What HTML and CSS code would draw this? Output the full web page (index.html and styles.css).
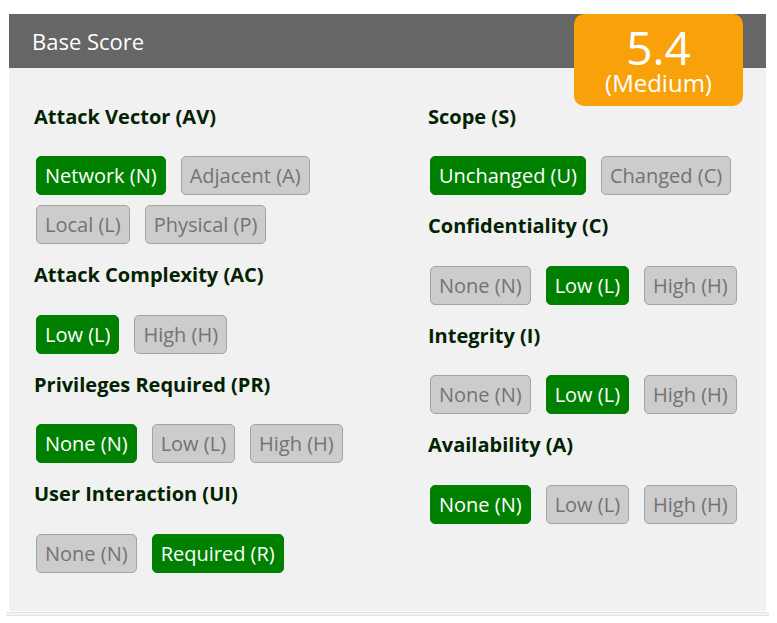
FILE: index.html
```html
<!DOCTYPE html>
<html>
<head>
<meta charset="utf-8">
<link rel="stylesheet" href="styles.css">
</head>
<body>
<div class="panel">
  <div class="panel-head">Base Score</div>
  <div class="score">
    <div class="score-num">5.4</div>
    <div class="score-sev">(Medium)</div>
  </div>
  <div class="panel-body">
    <div class="col">
      <div class="metric">
        <h3>Attack Vector (AV)</h3>
        <div class="opts">
          <span class="btn on">Network (N)</span><span class="btn">Adjacent (A)</span><span class="btn">Local (L)</span><span class="btn">Physical (P)</span>
        </div>
      </div>
      <div class="metric">
        <h3>Attack Complexity (AC)</h3>
        <div class="opts">
          <span class="btn on">Low (L)</span><span class="btn">High (H)</span>
        </div>
      </div>
      <div class="metric">
        <h3>Privileges Required (PR)</h3>
        <div class="opts">
          <span class="btn on">None (N)</span><span class="btn">Low (L)</span><span class="btn">High (H)</span>
        </div>
      </div>
      <div class="metric">
        <h3>User Interaction (UI)</h3>
        <div class="opts">
          <span class="btn">None (N)</span><span class="btn on">Required (R)</span>
        </div>
      </div>
    </div>
    <div class="col">
      <div class="metric">
        <h3>Scope (S)</h3>
        <div class="opts">
          <span class="btn on">Unchanged (U)</span><span class="btn">Changed (C)</span>
        </div>
      </div>
      <div class="metric">
        <h3>Confidentiality (C)</h3>
        <div class="opts">
          <span class="btn">None (N)</span><span class="btn on">Low (L)</span><span class="btn">High (H)</span>
        </div>
      </div>
      <div class="metric">
        <h3>Integrity (I)</h3>
        <div class="opts">
          <span class="btn">None (N)</span><span class="btn on">Low (L)</span><span class="btn">High (H)</span>
        </div>
      </div>
      <div class="metric">
        <h3>Availability (A)</h3>
        <div class="opts">
          <span class="btn on">None (N)</span><span class="btn">Low (L)</span><span class="btn">High (H)</span>
        </div>
      </div>
    </div>
  </div>
</div>
<div class="rule"></div>
</body>
</html>
```

FILE: styles.css
```css
html, body {
  margin: 0;
  padding: 0;
  background: #ffffff;
}
body {
  font-family: "Open Sans", "Noto Sans", sans-serif;
  padding-top: 14px;
}
.panel {
  position: relative;
  margin-left: 9px;
  width: 757px;
  background: #f1f1f1;
}
.panel-head {
  height: 54px;
  background: #666666;
  color: #ffffff;
  font-size: 22px;
  line-height: 54px;
  padding-left: 23px;
}
.score {
  position: absolute;
  top: 0;
  right: 23px;
  width: 169px;
  height: 92px;
  background: #f8a10b;
  border-radius: 10px;
  color: #ffffff;
  text-align: center;
}
.score-num {
  font-size: 46px;
  line-height: 44px;
  padding-top: 11px;
}
.score-sev {
  font-size: 24px;
  line-height: 28px;
}
.panel-body {
  display: grid;
  grid-template-columns: 394px 1fr;
  padding: 27.5px 0 28.5px 25px;
}
.metric h3 {
  margin: 8px 0 27.5px 0;
  font-size: 20px;
  line-height: 25px;
  font-weight: 700;
  color: #022202;
}
.opts {
  display: flex;
  flex-wrap: wrap;
  padding-left: 2px;
}
.btn {
  display: inline-block;
  font-size: 20px;
  line-height: 25px;
  padding: 6px 8px;
  margin: 0 15px 10px 0;
  border: 1px solid #a3a3a3;
  border-radius: 5px;
  background: #cccccc;
  color: #737373;
}
.btn.on {
  background: #008000;
  border-color: #008000;
  color: #ffffff;
}
.rule {
  margin: 1px 8px 0 6px;
  height: 2px;
  border-top: 1px solid #e2e2e2;
  border-bottom: 1px solid #e2e2e2;
  background: #f4f4f4;
}
```
